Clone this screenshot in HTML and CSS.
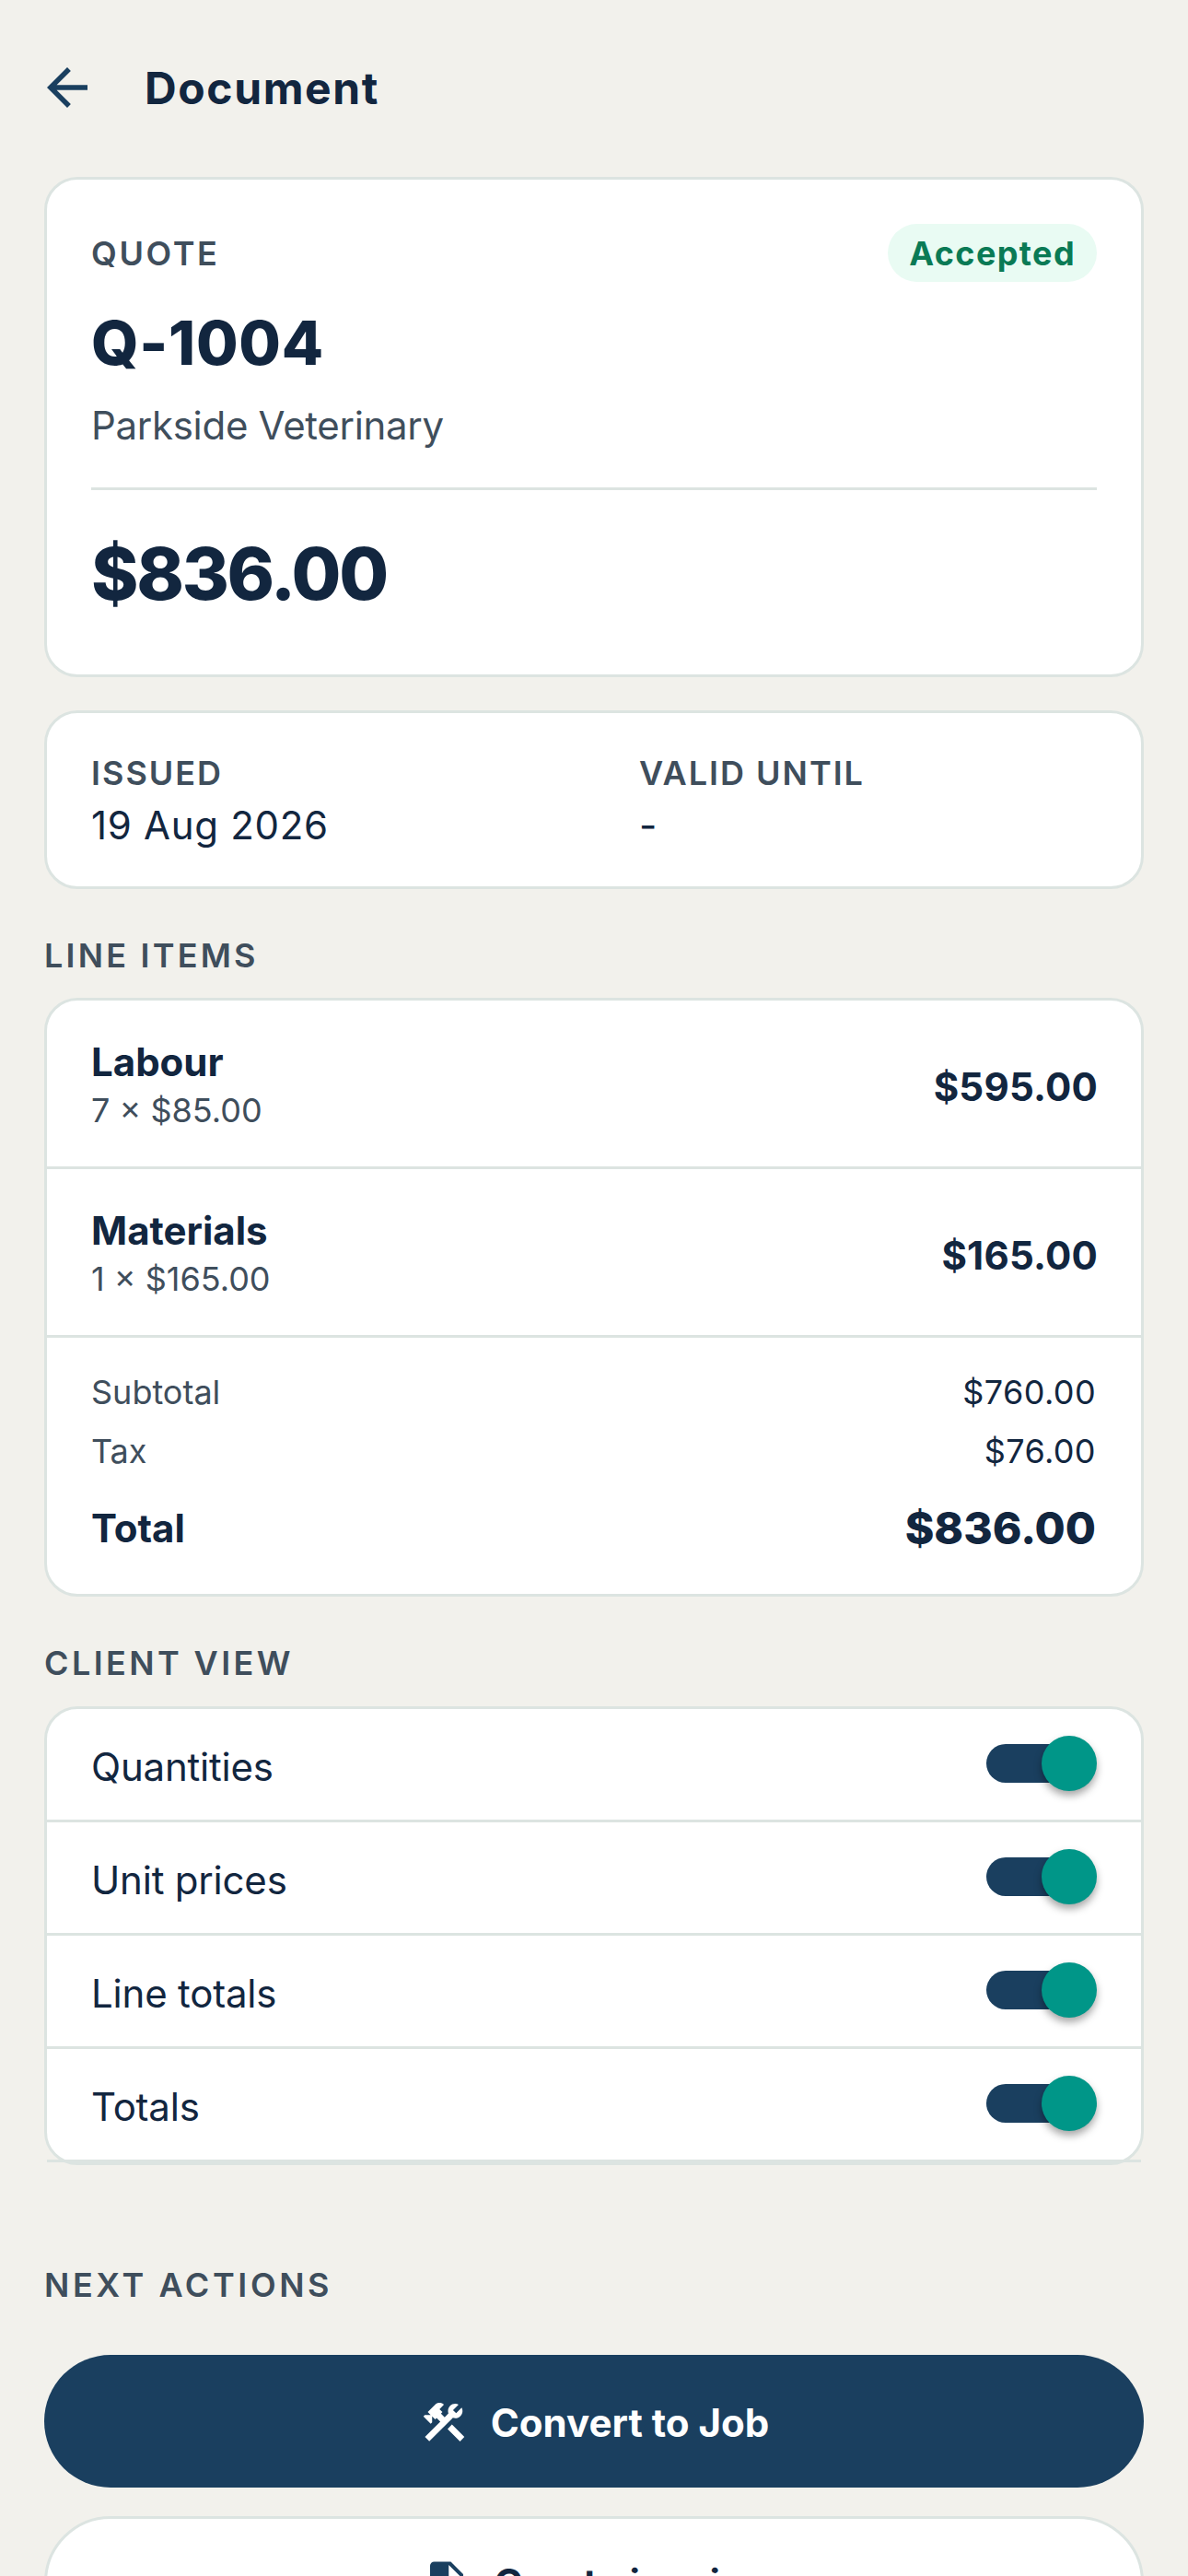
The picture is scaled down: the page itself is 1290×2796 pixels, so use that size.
FILE: index.html
```html
<!DOCTYPE html>
<html lang="en">
<head>
<meta charset="UTF-8" />
<title>Document</title>
<link rel="stylesheet" href="styles.css">
</head>
<body>
<div class="header">
<svg class="back-icon" viewBox="0 0 24 24"><path d="M20 11H7.83l5.59-5.59L12 4l-8 8 8 8 1.41-1.41L7.83 13H20v-2z"/></svg>
<h1>Document</h1>
</div>

<div class="card summary">
<div class="summary-top">
<span class="label">QUOTE</span>
<span class="badge">Accepted</span>
</div>
<h2>Q-1004</h2>
<p class="client">Parkside Veterinary</p>
<div class="divider"></div>
<p class="amount">$836.00</p>
</div>

<div class="card dates">
<div>
<p class="label">ISSUED</p>
<p class="date-value">19 Aug 2026</p>
</div>
<div>
<p class="label">VALID UNTIL</p>
<p class="date-value">-</p>
</div>
</div>

<h3 class="section-title line-title">LINE ITEMS</h3>
<div class="card">
<div class="line-item">
<div>
<p class="item-name">Labour</p>
<p class="item-sub">7 × $85.00</p>
</div>
<span class="item-price">$595.00</span>
</div>
<div class="line-item">
<div>
<p class="item-name">Materials</p>
<p class="item-sub">1 × $165.00</p>
</div>
<span class="item-price">$165.00</span>
</div>
<div class="totals">
<div class="total-row"><span>Subtotal</span><span class="total-num">$760.00</span></div>
<div class="total-row"><span>Tax</span><span class="total-num">$76.00</span></div>
<div class="total-row grand"><span>Total</span><span class="grand-num">$836.00</span></div>
</div>
</div>

<h3 class="section-title view-title">CLIENT VIEW</h3>
<div class="card">
<div class="toggle-row"><span>Quantities</span><div class="toggle"><div class="thumb"></div></div></div>
<div class="toggle-row"><span>Unit prices</span><div class="toggle"><div class="thumb"></div></div></div>
<div class="toggle-row"><span>Line totals</span><div class="toggle"><div class="thumb"></div></div></div>
<div class="toggle-row"><span>Totals</span><div class="toggle"><div class="thumb"></div></div></div>
</div>

<h3 class="section-title next-title">NEXT ACTIONS</h3>
<div class="actions">
<button class="btn primary">
<svg viewBox="0 0 24 24"><path d="M13.78 15.3L19.78 21.3L21.89 19.14L15.89 13.14L13.78 15.3M17.5 10.1C17.11 10.1 16.69 10.05 16.36 9.91L4.97 21.25L2.86 19.14L10.27 11.74L8.5 9.96L7.78 10.66L6.33 9.25V12.11L5.63 12.81L2.11 9.25L2.81 8.55H5.62L4.22 7.14L7.78 3.58C8.95 2.41 10.83 2.41 12 3.58L9.89 5.74L11.3 7.14L10.59 7.85L12.38 9.63L14.2 7.75C14.06 7.42 14 7 14 6.63C14 4.66 15.55 3.11 17.5 3.11C18.09 3.11 18.61 3.25 19.08 3.53L16.41 6.2L17.91 7.7L20.58 5.03C20.86 5.5 21 6 21 6.63C21 8.55 19.45 10.1 17.5 10.1Z"/></svg>
Convert to Job
</button>
<button class="btn outline">
<svg viewBox="0 0 24 24"><path d="M13 9H18.5L13 3.5V9M6 2H14L20 8V20A2 2 0 0 1 18 22H6C4.89 22 4 21.1 4 20V4C4 2.89 4.89 2 6 2M15 18V16H6V18H15M18 14V12H6V14H18Z"/></svg>
Create invoice
</button>
</div>
</body>
</html>
```

FILE: styles.css
```css
* {
box-sizing: border-box;
margin: 0;
padding: 0;
font-family: 'Inter', 'Liberation Sans', sans-serif;
}

body {
width: 1290px;
height: 2796px;
overflow: hidden;
padding: 0 48px;
background: #f2f1ec;
color: #12263f;
}

.header {
display: flex;
align-items: center;
height: 192px;
padding-bottom: 2px;
}

.back-icon {
width: 66px;
height: 66px;
margin-left: -8px;
margin-right: 51px;
fill: #1a3f5f;
}

.header h1 {
font-size: 48px;
font-weight: 700;
letter-spacing: 1.6px;
}

.card {
background: #fff;
border: 3px solid #dce4e1;
border-radius: 36px;
}

.label {
font-size: 36px;
font-weight: 600;
line-height: 54px;
letter-spacing: 2.6px;
color: #3f4e5c;
}

.summary {
height: 543px;
padding: 48px 48px 0;
}

.summary-top {
display: flex;
justify-content: space-between;
align-items: center;
height: 63px;
}

.badge {
padding: 2px 23px 0;
height: 63px;
line-height: 61px;
border-radius: 32px;
background: #e9fbf3;
color: #0a7a55;
font-size: 36px;
font-weight: 700;
letter-spacing: 1.4px;
}

.summary h2 {
margin-top: 21px;
font-size: 66px;
font-weight: 800;
letter-spacing: 0.7px;
line-height: 90px;
}

.client {
margin-top: 15px;
font-size: 42px;
letter-spacing: -0.3px;
line-height: 60px;
color: #3f4e5c;
}

.divider {
margin-top: 37px;
height: 3px;
background: #dce4e1;
}

.amount {
margin-top: 41px;
font-size: 78px;
font-weight: 800;
letter-spacing: -2.3px;
line-height: 100px;
}

.dates {
display: grid;
grid-template-columns: 1fr 1fr;
column-gap: 98px;
height: 194px;
margin-top: 36px;
padding: 38px 48px 0;
}

.dates .label {
letter-spacing: 2px;
}

.date-value {
font-size: 42px;
letter-spacing: 0.7px;
line-height: 60px;
}

.section-title {
font-size: 36px;
font-weight: 600;
line-height: 54px;
letter-spacing: 3.6px;
color: #3f4e5c;
}

.line-title {
margin-top: 45px;
margin-bottom: 19px;
letter-spacing: 3.2px;
}

.line-item {
display: flex;
justify-content: space-between;
align-items: center;
height: 183px;
padding: 4px 47px 0 48px;
border-bottom: 3px solid #dce4e1;
}

.item-name {
font-size: 42px;
font-weight: 700;
line-height: 54px;
}

.item-sub {
font-size: 36px;
line-height: 50px;
color: #3f4e5c;
}

.item-price {
margin-top: 2px;
font-size: 42px;
font-weight: 700;
letter-spacing: 0.2px;
}

.totals {
display: flex;
flex-direction: column;
gap: 16px;
padding: 35px 48px 38px;
}

.total-row {
display: flex;
justify-content: space-between;
font-size: 36px;
line-height: 48px;
color: #3f4e5c;
}

.total-num {
color: #12263f;
letter-spacing: 0.4px;
padding-right: 1px;
}

.total-row.grand {
margin-top: 11px;
align-items: center;
font-size: 42px;
font-weight: 700;
line-height: 66px;
color: #12263f;
}

.grand-num {
font-size: 48px;
font-weight: 800;
padding-right: 1px;
}

.view-title {
margin-top: 45px;
margin-bottom: 20px;
letter-spacing: 3.4px;
}

.toggle-row {
display: flex;
justify-content: space-between;
align-items: center;
height: 123px;
padding: 4px 48px 0;
border-bottom: 3px solid #dce4e1;
font-size: 42px;
letter-spacing: -0.2px;
}

.toggle {
position: relative;
width: 120px;
height: 42px;
margin-top: -6px;
}

.toggle::before {
content: "";
display: block;
width: 108px;
height: 42px;
border-radius: 21px;
background: #1a3f5f;
}

.thumb {
position: absolute;
top: -9px;
right: 0;
width: 60px;
height: 60px;
border-radius: 50%;
background: #009688;
box-shadow: 0 5px 8px rgba(0, 0, 0, 0.35);
}

.next-title {
margin-top: 103px;
margin-bottom: 49px;
}

.actions {
display: flex;
flex-direction: column;
gap: 31px;
}

.btn {
display: flex;
justify-content: center;
align-items: center;
gap: 24px;
width: 100%;
height: 144px;
flex-shrink: 0;
border-radius: 72px;
font-size: 42px;
font-weight: 700;
}

.btn svg {
width: 54px;
height: 54px;
fill: currentColor;
}

.primary {
padding-top: 2px;
background: #1a3f5f;
color: #fff;
border: none;
}

.outline {
background: #fff;
color: #12263f;
border: 3px solid #dce4e1;
}

.outline svg {
fill: #1a3f5f;
}
```
